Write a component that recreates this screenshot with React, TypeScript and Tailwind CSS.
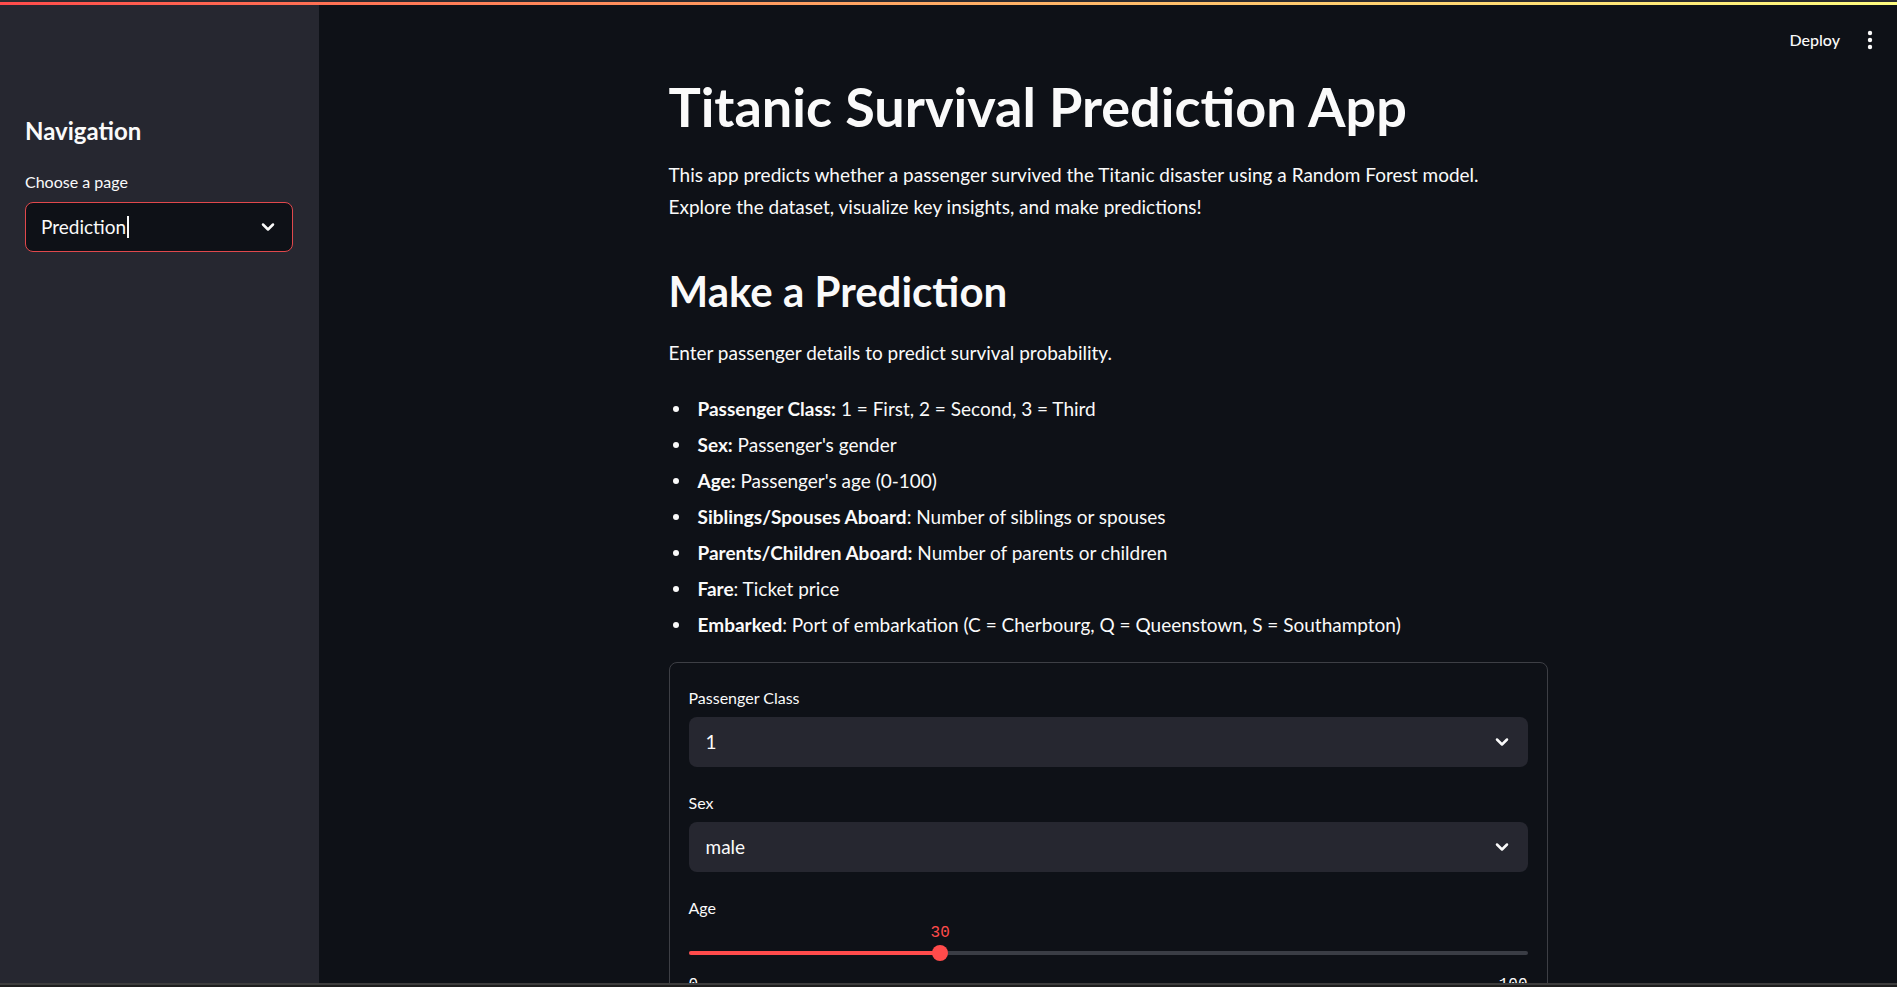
import { ChevronDown } from "lucide-react";

const sans = "font-['Lato','Noto_Sans',sans-serif]";
const mono = "font-['Liberation_Mono',monospace]";

const features = [
  { name: "Passenger Class:", text: " 1 = First, 2 = Second, 3 = Third" },
  { name: "Sex:", text: " Passenger's gender" },
  { name: "Age:", text: " Passenger's age (0-100)" },
  { name: "Siblings/Spouses Aboard", text: ": Number of siblings or spouses" },
  { name: "Parents/Children Aboard:", text: " Number of parents or children" },
  { name: "Fare", text: ": Ticket price" },
  { name: "Embarked", text: ": Port of embarkation (C = Cherbourg, Q = Queenstown, S = Southampton)" },
];

const SelectBox = ({ label, value }: { label: string; value: string }) => (
  <div className="flex flex-col shrink-0">
    <span className="text-[16px] leading-[24px] text-[#fafafa]">{label}</span>
    <div className="mt-[7px] h-[50px] rounded-[8px] bg-[#262730] flex items-center justify-between pl-[17px] pr-[16px]">
      <span className="text-[19px] text-[#fafafa]">{value}</span>
      <ChevronDown size={20} strokeWidth={3} className="text-[#fafafa]" />
    </div>
  </div>
);

const App = () => {
  const age = 30;

  return (
    <div className={`w-[1897px] h-[987px] flex flex-col overflow-hidden bg-[#0e1117] text-[#fafafa] ${sans}`}>
      {/* top decoration */}
      <div className="h-[2px] shrink-0 bg-[#2b2b30]" />
      <div className="h-[3px] shrink-0 bg-gradient-to-r from-[#ff4b4b] to-[#fffd80]" />

      <div className="flex-1 flex min-h-0 overflow-hidden">
        {/* Sidebar */}
        <aside className="w-[319px] shrink-0 bg-[#262730] px-[25px] pt-[110px]">
          <h2 className="text-[24px] leading-[32px] font-bold">Navigation</h2>
          <p className="mt-[23px] text-[16px] leading-[24px]">Choose a page</p>
          <div className="mt-[8px] h-[50px] w-[268px] rounded-[8px] border border-[#e0484c] bg-[#0e1117] flex items-center justify-between pl-[15px] pr-[14px]">
            <span className="flex items-center text-[19px]">
              Prediction
              <span className="ml-[1px] inline-block w-[1.5px] h-[22px] bg-[#fafafa]" />
            </span>
            <ChevronDown size={20} strokeWidth={3} />
          </div>
        </aside>

        {/* Main */}
        <main className="flex-1 flex flex-col min-w-0">
          <header className="h-[70px] shrink-0 flex items-center justify-end pr-[23px] gap-[26px]">
            <span className="text-[16px] font-medium">Deploy</span>
            <svg width="8" height="20" viewBox="0 0 8 20" fill="#fafafa">
              <circle cx="4" cy="3" r="2.2" />
              <circle cx="4" cy="10" r="2.2" />
              <circle cx="4" cy="17" r="2.2" />
            </svg>
          </header>

          <div className="w-[879px] mx-auto shrink-0">
            <h1 className="text-[54px] leading-[64px] font-bold">Titanic Survival Prediction App</h1>
            <p className="mt-[20px] text-[19px] leading-[32px]">
              This app predicts whether a passenger survived the Titanic disaster using a Random Forest model.
              <br />
              Explore the dataset, visualize key insights, and make predictions!
            </p>

            <h2 className="mt-[42px] text-[42px] leading-[52px] font-bold">Make a Prediction</h2>
            <p className="mt-[20px] text-[19px] leading-[32px]">Enter passenger details to predict survival probability.</p>

            <ul className="mt-[24px] flex flex-col gap-[4px] text-[19px] leading-[32px]">
              {features.map((f) => (
                <li key={f.name} className="flex">
                  <span className="w-[29px] shrink-0 flex items-center">
                    <span className="ml-[4px] w-[6px] h-[6px] rounded-full bg-[#fafafa]" />
                  </span>
                  <span>
                    <span className="font-bold">{f.name}</span>
                    {f.text}
                  </span>
                </li>
              ))}
            </ul>

            {/* form */}
            <div className="mt-[21px] rounded-[8px] border border-[#3d3f45] px-[19px] pt-[23px] pb-[24px] flex flex-col gap-[24px]">
              <SelectBox label="Passenger Class" value="1" />
              <SelectBox label="Sex" value="male" />

              <div className="flex flex-col">
                <span className="text-[16px] leading-[24px]">Age</span>
                <div className="relative mt-[3px] h-[52px]">
                  <span
                    className={`absolute top-0 -translate-x-1/2 text-[16px] leading-[20px] text-[#ff4b4b] ${mono}`}
                    style={{ left: `${age}%` }}
                  >
                    {age}
                  </span>
                  <div className="absolute left-0 right-0 top-[28px] h-[4px] rounded-full bg-[#3a3d45]" />
                  <div className="absolute left-0 top-[28px] h-[4px] rounded-full bg-[#ff4b4b]" style={{ width: `${age}%` }} />
                  <div
                    className="absolute top-[22px] w-[16px] h-[16px] -translate-x-1/2 rounded-full bg-[#ff4b4b]"
                    style={{ left: `${age}%` }}
                  />
                </div>
                <div className={`flex justify-between text-[16px] leading-[20px] ${mono}`}>
                  <span>0</span>
                  <span>100</span>
                </div>
              </div>
            </div>
          </div>
        </main>
      </div>

      {/* bottom window edge */}
      <div className="h-[2px] shrink-0 bg-[#3d3d3d]" />
      <div className="h-[2px] shrink-0 bg-[#1e1e1e]" />
    </div>
  );
};

export default App;
